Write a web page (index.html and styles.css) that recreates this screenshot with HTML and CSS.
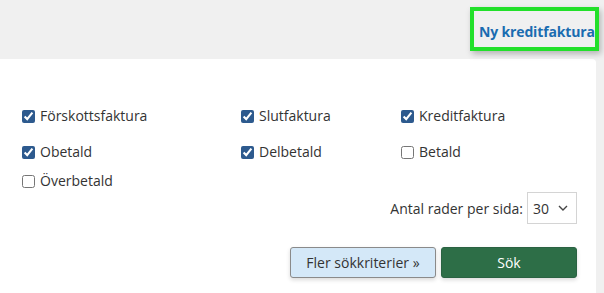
FILE: index.html
```html
<!DOCTYPE html>
<html lang="sv">
<head>
<meta charset="utf-8">
<link rel="stylesheet" href="styles.css">
</head>
<body>
<div class="topbar">
  <a class="new-link" href="#">Ny kreditfaktura</a>
</div>
<div class="panel">
  <div class="group">
    <div class="row">
      <label class="opt c1"><input type="checkbox" checked><span>Förskottsfaktura</span></label>
      <label class="opt c2"><input type="checkbox" checked><span>Slutfaktura</span></label>
      <label class="opt c3"><input type="checkbox" checked><span>Kreditfaktura</span></label>
    </div>
  </div>
  <div class="group group-status">
    <div class="row">
      <label class="opt c1"><input type="checkbox" checked><span>Obetald</span></label>
      <label class="opt c2"><input type="checkbox" checked><span>Delbetald</span></label>
      <label class="opt c3"><input type="checkbox"><span>Betald</span></label>
    </div>
    <div class="row">
      <label class="opt c1"><input type="checkbox"><span>Överbetald</span></label>
    </div>
  </div>
  <div class="perpage">
    <span class="perpage-label">Antal rader per sida:</span>
    <div class="select">
      <span>30</span>
      <svg width="10" height="6" viewBox="0 0 10 6"><path d="M1 1 L5 5 L9 1" fill="none" stroke="#444" stroke-width="1.4"/></svg>
    </div>
  </div>
  <div class="actions">
    <button class="btn btn-more">Fler sökkriterier »</button>
    <button class="btn btn-search">Sök</button>
  </div>
</div>
</body>
</html>
```
FILE: styles.css
```css
html, body {
  margin: 0;
  padding: 0;
}
body {
  background: #f0f0f0;
  font-family: "Open Sans", "Liberation Sans", sans-serif;
  font-size: 14px;
  color: #333;
  width: 604px;
  height: 293px;
  overflow: hidden;
}
.topbar {
  height: 59px;
  display: flex;
  justify-content: flex-end;
  align-items: flex-start;
  padding-right: 9px;
  box-sizing: border-box;
}
.new-link {
  margin-top: 11px;
  width: 121px;
  height: 36px;
  box-sizing: border-box;
  padding: 11px 0 0 5px;
  font-weight: bold;
  font-size: 14px;
  line-height: 20px;
  letter-spacing: -0.15px;
  color: #1a6cb0;
  text-decoration: none;
  white-space: nowrap;
  box-shadow: 0 0 0 4px #22e02a, 2px 3px 6px 4px rgba(0,0,0,0.25);
  outline: none;
}
.panel {
  background: #fff;
  width: 596px;
  height: 234px;
  border-top-right-radius: 4px;
  padding: 47px 19px 0 22px;
  box-sizing: border-box;
}
.group-status {
  margin-top: 16px;
  display: flex;
  flex-direction: column;
  gap: 9px;
}
.row {
  display: flex;
  height: 20px;
}
.opt {
  display: flex;
  align-items: center;
  gap: 5px;
  line-height: 20px;
}
.c1 { width: 219px; }
.c2 { width: 160px; }
.opt input {
  margin: 0;
  width: 13px;
  height: 13px;
  accent-color: #2d5a8e;
}
.perpage {
  margin-top: 1px;
  display: flex;
  justify-content: flex-end;
  align-items: center;
  gap: 4px;
}
.select {
  width: 50px;
  height: 32px;
  box-sizing: border-box;
  border: 1px solid #d4d4d4;
  display: flex;
  align-items: center;
  justify-content: space-between;
  padding: 0 8px 0 5px;
  color: #333;
}
.actions {
  margin-top: 23px;
  display: flex;
  justify-content: flex-end;
  gap: 5px;
}
.btn {
  height: 31px;
  font-family: "Open Sans", "Liberation Sans", sans-serif;
  font-size: 14px;
  border-radius: 3px;
  box-shadow: 0 2px 4px rgba(0,0,0,0.15);
  cursor: pointer;
}
.btn-more {
  width: 146px;
  background: #d4e8f8;
  border: 1px solid #8a8a8a;
  color: #333;
}
.btn-search {
  width: 136px;
  background: #2d6e47;
  border: 1px solid #2a6242;
  color: #fff;
}
```
